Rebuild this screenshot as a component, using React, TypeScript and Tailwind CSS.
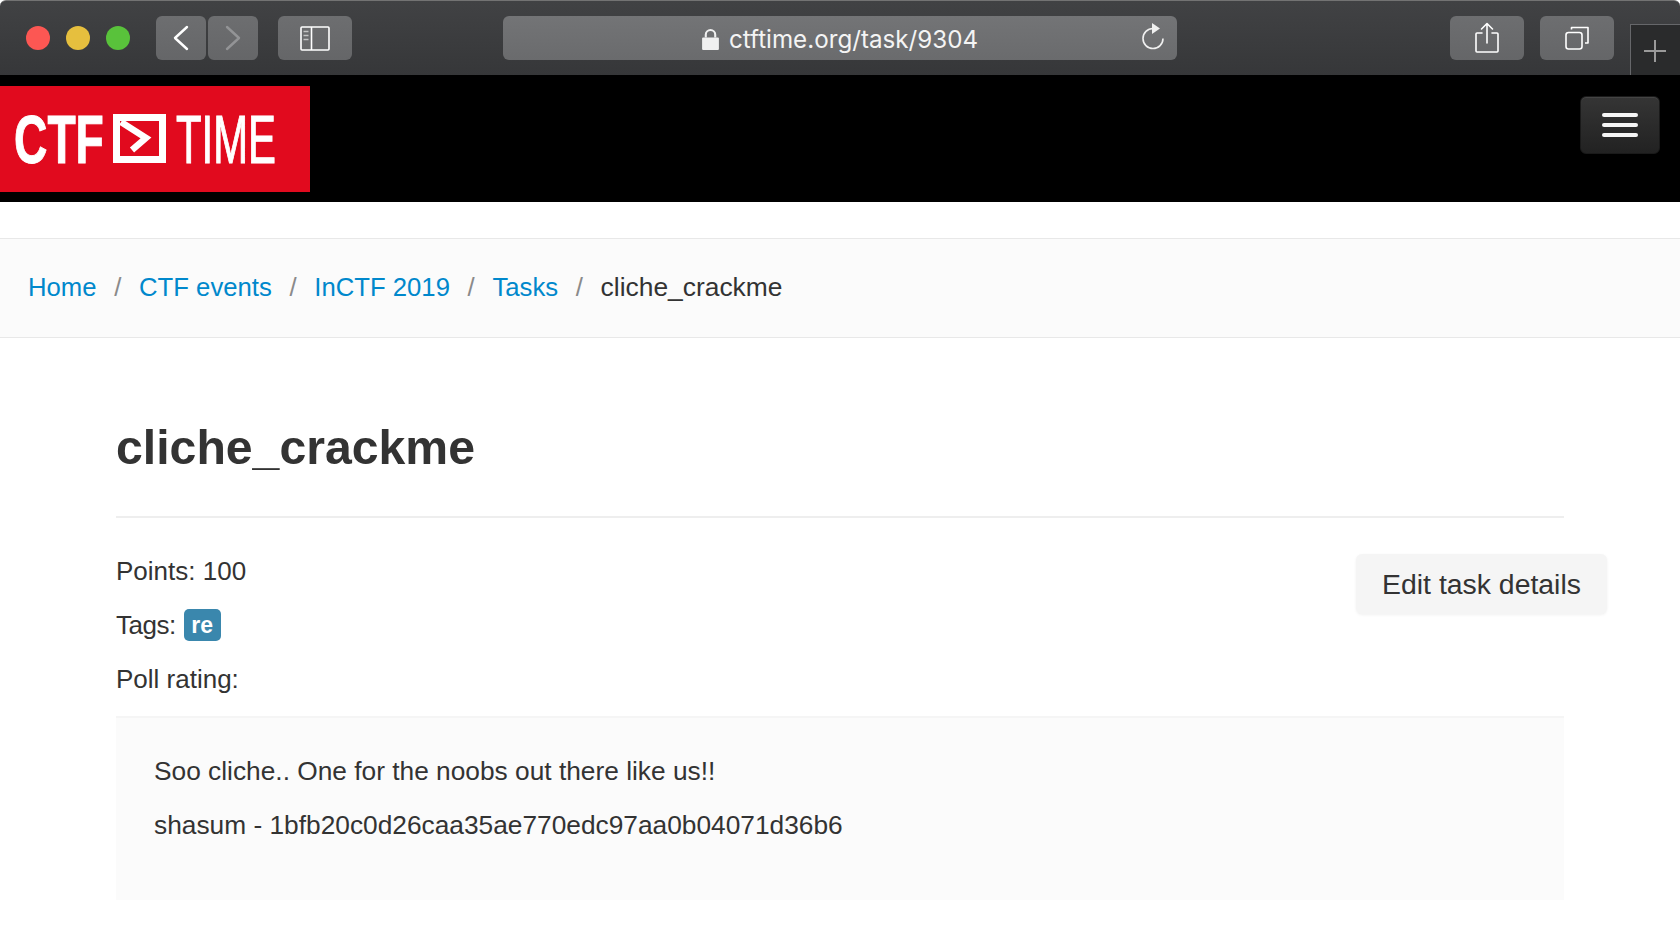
const ToolbarButton = ({ width, children }: { width: string; children?: React.ReactNode }) => (
    <div className={`${width} h-11 rounded-[6px] bg-gradient-to-b from-[#6d6e70] to-[#656668] flex items-center justify-center`}>
        {children}
    </div>
)

const Logo = () => (
    <svg width="310" height="106" viewBox="0 0 310 106" className="block">
        <rect width="310" height="106" fill="#e10a1e" />
        <text transform="translate(14 77) scale(0.68 1)" fontFamily="'Liberation Sans', sans-serif" fontWeight="700" fontSize="68" fill="#ffffff" stroke="#ffffff" strokeWidth="1">CTF</text>
        <rect x="116.5" y="31.5" width="46" height="42" fill="none" stroke="#ffffff" strokeWidth="7" />
        <path d="M121 36 L146 52 L132 64" fill="none" stroke="#ffffff" strokeWidth="6.5" />
        <text transform="translate(176 77) scale(0.615 1)" fontFamily="'Liberation Sans', sans-serif" fontWeight="400" fontSize="68" fill="#ffffff" stroke="#ffffff" strokeWidth="1.2">TIME</text>
    </svg>
)

const Crumb = ({ label }: { label: string }) => (
    <>
        <a className="text-[#0088cc]">{label}</a>
        <span className="text-[#8a8a8a] w-[42.5px] text-center">/</span>
    </>
)

export default function App() {
    return (
        <div className="min-h-[934px] bg-white text-[#333333] text-[26px] font-['Liberation_Sans',sans-serif]">
            <div className="h-[75px] rounded-t-[6px] bg-gradient-to-b from-[#414244] to-[#363739] border-t border-[#737373] flex items-start pt-[15px] pl-[26px] relative">
                <div className="flex items-center gap-4 h-11">
                    <div className="w-6 h-6 rounded-full bg-[#fc5753]" />
                    <div className="w-6 h-6 rounded-full bg-[#e6bf3e]" />
                    <div className="w-6 h-6 rounded-full bg-[#59c23b]" />
                </div>
                <div className="flex gap-[2px] ml-[26px]">
                    <ToolbarButton width="w-[50px]">
                        <svg width="18" height="26" viewBox="0 0 18 26" fill="none" stroke="#ffffff" strokeWidth="2.4" strokeLinecap="round" strokeLinejoin="round"><path d="M15 2 L3 13 L15 24" /></svg>
                    </ToolbarButton>
                    <ToolbarButton width="w-[50px]">
                        <svg width="18" height="26" viewBox="0 0 18 26" fill="none" stroke="#939496" strokeWidth="2.4" strokeLinecap="round" strokeLinejoin="round"><path d="M3 2 L15 13 L3 24" /></svg>
                    </ToolbarButton>
                </div>
                <div className="ml-5">
                    <ToolbarButton width="w-[74px]">
                        <svg width="30" height="25" viewBox="0 0 30 25" fill="none" stroke="#ffffff" strokeWidth="1.6">
                            <rect x="1" y="1" width="28" height="23" rx="1" />
                            <path d="M11.5 1 V24" />
                            <path d="M3.5 5.5 H8.5 M3.5 9.5 H8.5 M3.5 13.5 H8.5" stroke="#c4c4c4" />
                        </svg>
                    </ToolbarButton>
                </div>
                <div className="ml-[151px] w-[674px] h-11 rounded-[6px] bg-gradient-to-b from-[#737476] to-[#6a6b6d] flex items-center relative text-[#f4f4f4] font-['Inter',sans-serif] text-[24.2px]">
                    <div className="flex-1 flex items-center justify-center gap-[10px] pt-[4px]">
                        <svg width="17" height="21" viewBox="0 0 16 20" fill="#f0f0f0">
                            <path d="M2.5 8 V5.5 a5.5 5.5 0 0 1 11 0 V8 H11.5 V5.5 a3.5 3.5 0 0 0 -7 0 V8 Z" />
                            <rect y="8" width="16" height="12" rx="1" />
                        </svg>
                        <span>ctftime.org/task/9304</span>
                    </div>
                    <svg className="absolute right-[12px] top-[7px]" width="24" height="28" viewBox="0 0 24 28" fill="none" stroke="#f0f0f0" strokeWidth="1.6">
                        <path d="M12 5.5 A10 10 0 1 0 22 15.5" />
                        <path d="M11 0 L19 5.5 L11 11 Z" fill="#f0f0f0" stroke="none" />
                    </svg>
                </div>
                <div className="ml-[273px]">
                    <ToolbarButton width="w-[74px]">
                        <svg width="24" height="32" viewBox="0 0 24 32" fill="none" stroke="#ffffff" strokeWidth="1.6" strokeLinejoin="round" strokeLinecap="round">
                            <path d="M7 11 H2 a1 1 0 0 0 -1 1 V29 a1 1 0 0 0 1 1 H22 a1 1 0 0 0 1 -1 V12 a1 1 0 0 0 -1 -1 H17" />
                            <path d="M12 21 V2 M6.5 7 L12 1.5 L17.5 7" />
                        </svg>
                    </ToolbarButton>
                </div>
                <div className="ml-4">
                    <ToolbarButton width="w-[74px]">
                        <svg width="24" height="24" viewBox="0 0 24 24" fill="none" stroke="#ffffff" strokeWidth="1.6" strokeLinejoin="round">
                            <rect x="1" y="6.5" width="16" height="16.5" rx="2.5" />
                            <path d="M6.5 3.5 V1.5 H23 V17 H20" />
                        </svg>
                    </ToolbarButton>
                </div>
                <div className="absolute right-0 top-[23px] w-[50px] h-[51px] bg-[#2a2b2c] border-l border-t border-[#66676a] flex items-center justify-center pt-[2px] pr-[2px]">
                    <svg width="22" height="22" viewBox="0 0 22 22" stroke="#9a9a9a" strokeWidth="2"><path d="M11 0 V22 M0 11 H22" /></svg>
                </div>
            </div>

            <div className="h-[127px] bg-black flex items-start justify-between pt-[11px]">
                <Logo />
                <div className="mt-[10px] mr-5 w-20 h-[58px] rounded-[6px] bg-gradient-to-b from-[#353535] to-[#222222] border border-[#1a1a1a] shadow-[inset_0_1px_0_rgba(255,255,255,0.08)] flex flex-col items-center justify-center gap-[6px]">
                    <div className="w-9 h-1 rounded-full bg-[#f5f5f5]" />
                    <div className="w-9 h-1 rounded-full bg-[#f5f5f5]" />
                    <div className="w-9 h-1 rounded-full bg-[#f5f5f5]" />
                </div>
            </div>

            <div className="mt-[36px] h-[100px] bg-[#fbfbfb] border-y border-[#e8e8e8] flex items-center pl-[28px] pb-[2px] text-[25.7px]">
                <Crumb label="Home" />
                <Crumb label="CTF events" />
                <Crumb label="InCTF 2019" />
                <Crumb label="Tasks" />
                <span className="text-[26.4px] mt-[2px]">cliche_crackme</span>
            </div>

            <div className="mx-[116px] pt-[78px]">
                <h1 className="text-[48.2px] leading-[62px] font-bold pb-[38px] border-b-2 border-[#eeeeee]">cliche_crackme</h1>
                <div className="flex justify-between mt-[35px]">
                    <div className="flex flex-col gap-[18px] leading-[36px]">
                        <div>Points: 100</div>
                        <div className="flex items-center gap-2">
                            <span className="tracking-[-0.5px]">Tags:</span>
                            <span className="w-[37px] h-8 rounded-[5px] bg-[#3a87ad] text-white text-[23px] font-bold flex items-center justify-center">re</span>
                        </div>
                        <div>Poll rating:</div>
                    </div>
                    <div className="-mr-[43px] mt-[1px] w-[251px] h-[60px] rounded-[6px] bg-[#f5f5f5] shadow-[0_1px_3px_rgba(0,0,0,0.06)] text-[28.4px] flex items-center justify-center">
                        Edit task details
                    </div>
                </div>
                <div className="mt-[19px] h-[184px] bg-[#fbfbfb] border-t-2 border-[#f5f5f5] pl-[38px] pt-[35px] flex flex-col gap-[18px] leading-[36px] text-[26.3px]">
                    <div>Soo cliche.. One for the noobs out there like us!!</div>
                    <div>shasum - 1bfb20c0d26caa35ae770edc97aa0b04071d36b6</div>
                </div>
            </div>
        </div>
    )
}
